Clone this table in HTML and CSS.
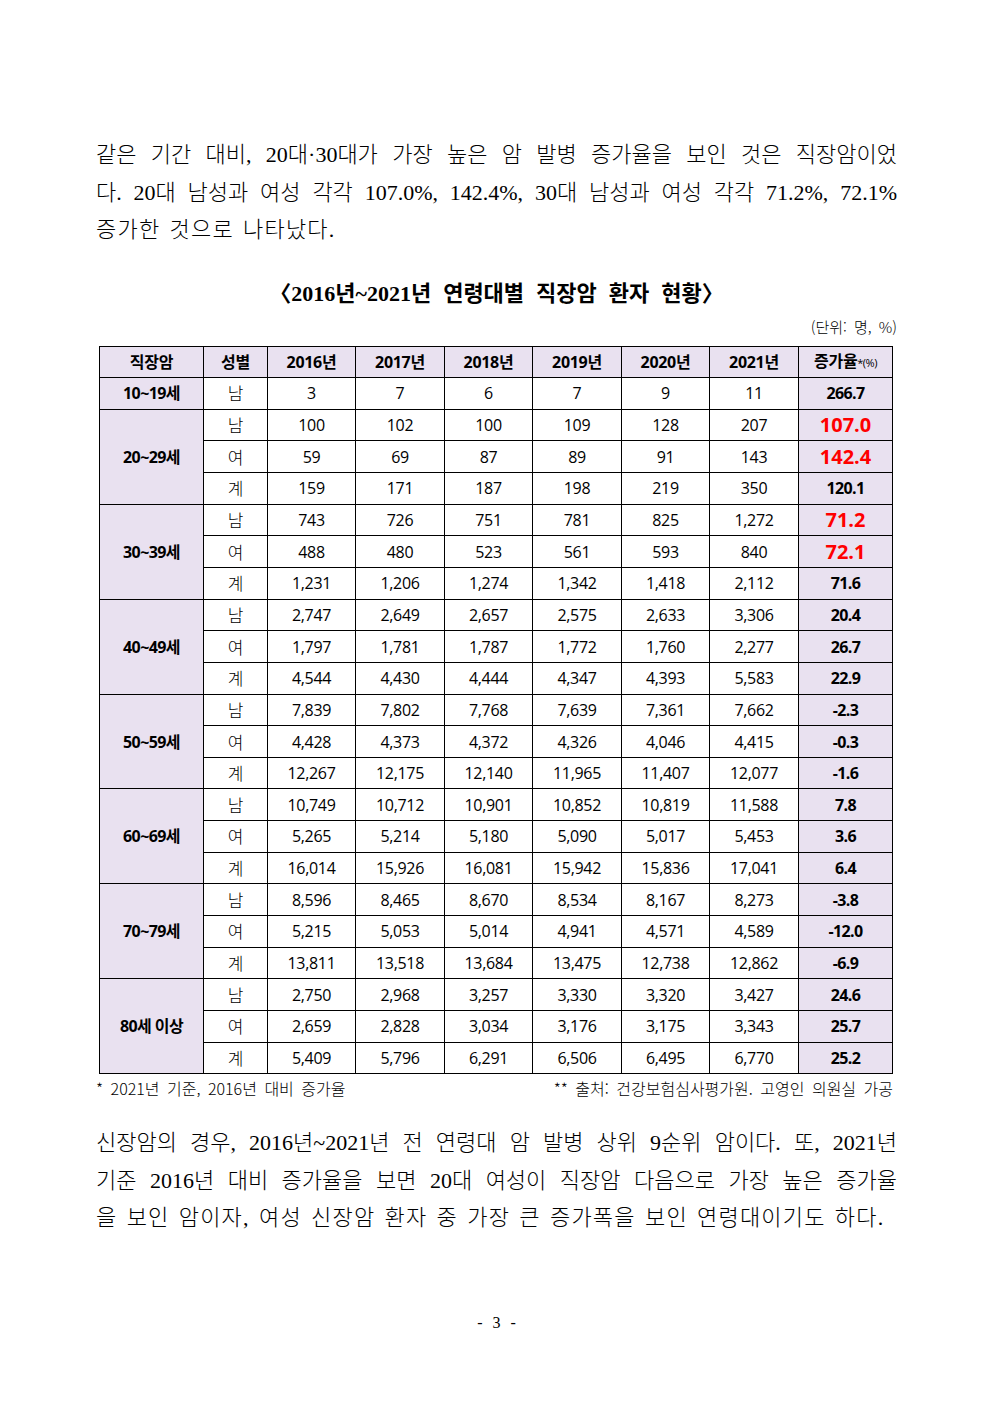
FILE: index.html
```html
<!DOCTYPE html>
<html lang="ko">
<head>
<meta charset="utf-8">
<link rel="stylesheet" href="styles.css">
</head>
<body>
<div class="page">
  <div class="para">
    <span class="line">같은 기간 대비, 20대·30대가 가장 높은 암 발병 증가율을 보인 것은 직장암이었</span>
    <span class="line">다. 20대 남성과 여성 각각 107.0%, 142.4%, 30대 남성과 여성 각각 71.2%, 72.1%</span>
    <span class="line last">증가한 것으로 나타났다.</span>
  </div>

  <div class="title">〈2016년~2021년 연령대별 직장암 환자 현황〉</div>
  <div class="unit">(단위: 명, %)</div>

  <table class="data">
    <colgroup>
      <col class="c-age"><col class="c-sex">
      <col class="c-y1"><col class="c-y2"><col class="c-y1"><col class="c-y2"><col class="c-y1"><col class="c-y2">
      <col class="c-rate">
    </colgroup>
    <thead>
      <tr>
        <th class="hl">직장암</th><th class="hl">성별</th>
        <th class="hl">2016년</th><th class="hl">2017년</th><th class="hl">2018년</th>
        <th class="hl">2019년</th><th class="hl">2020년</th><th class="hl">2021년</th>
        <th class="hl">증가율<span class="sup">*(%)</span></th>
      </tr>
    </thead>
    <tbody>
      <tr class="grp"><td class="age">10~19세</td><td class="sex">남</td><td>3</td><td>7</td><td>6</td><td>7</td><td>9</td><td>11</td><td class="rate">266.7</td></tr>

      <tr class="grp"><td class="age" rowspan="3">20~29세</td><td class="sex">남</td><td>100</td><td>102</td><td>100</td><td>109</td><td>128</td><td>207</td><td class="rate red">107.0</td></tr>
      <tr><td class="sex">여</td><td>59</td><td>69</td><td>87</td><td>89</td><td>91</td><td>143</td><td class="rate red">142.4</td></tr>
      <tr><td class="sex">계</td><td>159</td><td>171</td><td>187</td><td>198</td><td>219</td><td>350</td><td class="rate">120.1</td></tr>

      <tr class="grp"><td class="age" rowspan="3">30~39세</td><td class="sex">남</td><td>743</td><td>726</td><td>751</td><td>781</td><td>825</td><td>1,272</td><td class="rate red">71.2</td></tr>
      <tr><td class="sex">여</td><td>488</td><td>480</td><td>523</td><td>561</td><td>593</td><td>840</td><td class="rate red">72.1</td></tr>
      <tr><td class="sex">계</td><td>1,231</td><td>1,206</td><td>1,274</td><td>1,342</td><td>1,418</td><td>2,112</td><td class="rate">71.6</td></tr>

      <tr class="grp"><td class="age" rowspan="3">40~49세</td><td class="sex">남</td><td>2,747</td><td>2,649</td><td>2,657</td><td>2,575</td><td>2,633</td><td>3,306</td><td class="rate">20.4</td></tr>
      <tr><td class="sex">여</td><td>1,797</td><td>1,781</td><td>1,787</td><td>1,772</td><td>1,760</td><td>2,277</td><td class="rate">26.7</td></tr>
      <tr><td class="sex">계</td><td>4,544</td><td>4,430</td><td>4,444</td><td>4,347</td><td>4,393</td><td>5,583</td><td class="rate">22.9</td></tr>

      <tr class="grp"><td class="age" rowspan="3">50~59세</td><td class="sex">남</td><td>7,839</td><td>7,802</td><td>7,768</td><td>7,639</td><td>7,361</td><td>7,662</td><td class="rate">-2.3</td></tr>
      <tr><td class="sex">여</td><td>4,428</td><td>4,373</td><td>4,372</td><td>4,326</td><td>4,046</td><td>4,415</td><td class="rate">-0.3</td></tr>
      <tr><td class="sex">계</td><td>12,267</td><td>12,175</td><td>12,140</td><td>11,965</td><td>11,407</td><td>12,077</td><td class="rate">-1.6</td></tr>

      <tr class="grp"><td class="age" rowspan="3">60~69세</td><td class="sex">남</td><td>10,749</td><td>10,712</td><td>10,901</td><td>10,852</td><td>10,819</td><td>11,588</td><td class="rate">7.8</td></tr>
      <tr><td class="sex">여</td><td>5,265</td><td>5,214</td><td>5,180</td><td>5,090</td><td>5,017</td><td>5,453</td><td class="rate">3.6</td></tr>
      <tr><td class="sex">계</td><td>16,014</td><td>15,926</td><td>16,081</td><td>15,942</td><td>15,836</td><td>17,041</td><td class="rate">6.4</td></tr>

      <tr class="grp"><td class="age" rowspan="3">70~79세</td><td class="sex">남</td><td>8,596</td><td>8,465</td><td>8,670</td><td>8,534</td><td>8,167</td><td>8,273</td><td class="rate">-3.8</td></tr>
      <tr><td class="sex">여</td><td>5,215</td><td>5,053</td><td>5,014</td><td>4,941</td><td>4,571</td><td>4,589</td><td class="rate">-12.0</td></tr>
      <tr><td class="sex">계</td><td>13,811</td><td>13,518</td><td>13,684</td><td>13,475</td><td>12,738</td><td>12,862</td><td class="rate">-6.9</td></tr>

      <tr class="grp"><td class="age" rowspan="3">80세 이상</td><td class="sex">남</td><td>2,750</td><td>2,968</td><td>3,257</td><td>3,330</td><td>3,320</td><td>3,427</td><td class="rate">24.6</td></tr>
      <tr><td class="sex">여</td><td>2,659</td><td>2,828</td><td>3,034</td><td>3,176</td><td>3,175</td><td>3,343</td><td class="rate">25.7</td></tr>
      <tr><td class="sex">계</td><td>5,409</td><td>5,796</td><td>6,291</td><td>6,506</td><td>6,495</td><td>6,770</td><td class="rate">25.2</td></tr>
    </tbody>
  </table>

  <div class="notes">
    <span>* 2021년 기준, 2016년 대비 증가율</span>
    <span>** 출처: 건강보험심사평가원. 고영인 의원실 가공</span>
  </div>

  <div class="para para2">
    <span class="line">신장암의 경우, 2016년~2021년 전 연령대 암 발병 상위 9순위 암이다. 또, 2021년</span>
    <span class="line">기준 2016년 대비 증가율을 보면 20대 여성이 직장암 다음으로 가장 높은 증가율</span>
    <span class="line last">을 보인 암이자, 여성 신장암 환자 중 가장 큰 증가폭을 보인 연령대이기도 하다.</span>
  </div>

  <div class="pagenum">- 3 -</div>
</div>
</body>
</html>
```

FILE: styles.css
```css
html, body {
  margin: 0;
  padding: 0;
  background: #ffffff;
  color: #000000;
}

.page {
  width: 801px;
  margin-left: 96px;
  padding-top: 136px;
  font-family: "Liberation Serif", "Noto Sans CJK KR", serif;
}

.para {
  font-size: 22px;
  line-height: 37.5px;
  font-weight: 300;
  word-spacing: 1px;
}

.line {
  display: block;
  text-align: justify;
  text-align-last: justify;
  white-space: nowrap;
}

.line.last {
  text-align-last: left;
  letter-spacing: 1.2px;
  word-spacing: 2.5px;
}

.title {
  margin-top: 30px;
  text-align: center;
  font-size: 22px;
  line-height: 30px;
  font-weight: 700;
  word-spacing: 6.5px;
}

.unit {
  margin-top: 9px;
  text-align: right;
  font-family: "Noto Sans CJK KR", sans-serif;
  font-size: 15px;
  line-height: 18px;
  font-weight: 300;
  word-spacing: 3px;
}

.data {
  margin-top: 10px;
  margin-left: 3px;
  width: 793px;
  border-collapse: collapse;
  table-layout: fixed;
  font-family: "Open Sans", "Noto Sans CJK KR", sans-serif;
  font-size: 16px;
}

.c-age { width: 104px; }
.c-sex { width: 64px; }
.c-y1 { width: 88px; }
.c-y2 { width: 89px; }
.c-rate { width: 94px; }

.data th,
.data td {
  border: 1px solid #000;
  height: 30.65px;
  padding: 0;
  text-align: center;
  vertical-align: middle;
  line-height: 20px;
  letter-spacing: -0.3px;
}

.data th {
  font-weight: 700;
  background: #e9e1f0;
}

.data .sup {
  font-size: 11px;
  font-weight: 400;
  letter-spacing: -0.5px;
}

.data .age {
  background: #e9e1f0;
  font-weight: 700;
  letter-spacing: -0.6px;
}

.data .sex {
  font-family: "Noto Sans CJK KR", sans-serif;
  font-weight: 300;
  font-size: 17px;
}

.data .rate {
  background: #e9e1f0;
  font-weight: 700;
  letter-spacing: -0.6px;
}

.data .rate.red {
  color: #ff0000;
  font-size: 20px;
  letter-spacing: 0;
}

.data thead tr th {
  border-bottom: 1.5px solid #000;
}

.data tr.grp td {
  border-top: 1.5px solid #000;
}

.notes {
  margin-top: 5px;
  width: 797px;
  display: flex;
  justify-content: space-between;
  font-family: "Noto Sans CJK KR", sans-serif;
  font-size: 16px;
  line-height: 18px;
  font-weight: 300;
  word-spacing: 3px;
}

.para2 {
  margin-top: 27px;
}

.pagenum {
  margin-top: 76px;
  text-align: center;
  font-size: 16px;
  line-height: 20px;
  word-spacing: 6px;
}
```
